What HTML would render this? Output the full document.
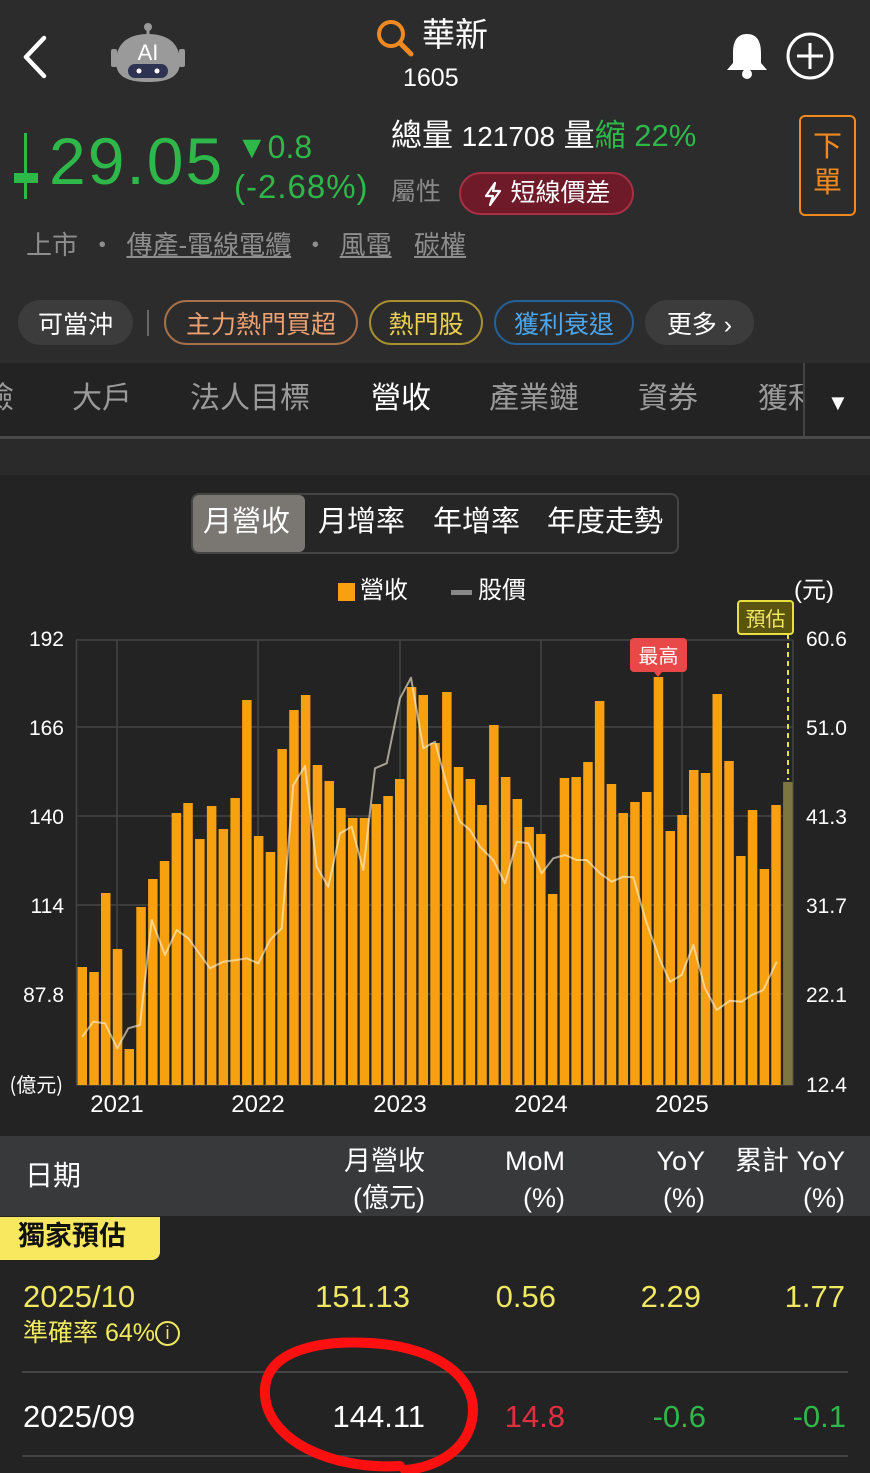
<!DOCTYPE html>
<html><head><meta charset="utf-8">
<style>
*{margin:0;padding:0;box-sizing:border-box}
body{width:870px;height:1473px;background:#232323;font-family:"Liberation Sans","Noto Sans CJK TC",sans-serif;color:#fff;position:relative;overflow:hidden}
.a{position:absolute;white-space:nowrap;line-height:1}
.chip{position:absolute;top:300px;height:45px;border-radius:23px;font-size:25px;display:flex;align-items:center;justify-content:center;border:2px solid}
.tab{position:absolute;top:384px;font-size:30px;color:#9a9a9a;line-height:1}
.r{text-align:right}
</style></head><body>
<!-- header -->
<div class="a" style="left:0;top:0;width:870px;height:363px;background:#2c2c2c"></div>
<svg class="a" style="left:18px;top:34px" width="32" height="46" viewBox="0 0 32 46"><path d="M26 4 L8 23 L26 42" fill="none" stroke="#fff" stroke-width="4.5" stroke-linecap="round" stroke-linejoin="round"/></svg>
<svg class="a" style="left:108px;top:22px" width="80" height="64" viewBox="0 0 80 64">
<circle cx="40" cy="5" r="4" fill="#999"/><rect x="38.5" y="6" width="3" height="10" fill="#999"/>
<rect x="3" y="27" width="6" height="18" rx="2" fill="#999"/><rect x="71" y="27" width="6" height="18" rx="2" fill="#999"/>
<path d="M8 40 C8 20 22 12 40 12 C58 12 72 20 72 40 C72 55 60 60 40 60 C20 60 8 55 8 40Z" fill="#9a9a9a"/>
<text x="40" y="38" font-size="22" fill="#fff" text-anchor="middle" font-family="Liberation Sans">AI</text>
<rect x="20" y="42" width="40" height="14" rx="7" fill="#2e3352"/><circle cx="31" cy="49" r="2.5" fill="#fff"/><circle cx="49" cy="49" r="2.5" fill="#fff"/></svg>
<svg class="a" style="left:375px;top:18px" width="40" height="40" viewBox="0 0 40 40"><circle cx="16" cy="16" r="12" fill="none" stroke="#f08a20" stroke-width="4"/><path d="M25 25 L36 36" stroke="#f08a20" stroke-width="5" stroke-linecap="round"/></svg>
<div class="a" style="left:422px;top:18px;font-size:33px">華新</div>
<div class="a" style="left:403px;top:66px;font-size:25px">1605</div>
<svg class="a" style="left:724px;top:31px" width="46" height="50" viewBox="0 0 46 50"><path d="M23 3 C12 3 9 12 9 22 L9 32 L3 39 L43 39 L37 32 L37 22 C37 12 34 3 23 3Z" fill="#fff"/><circle cx="23" cy="43" r="5" fill="#fff"/></svg>
<svg class="a" style="left:785px;top:31px" width="50" height="50" viewBox="0 0 50 50"><circle cx="25" cy="25" r="22" fill="none" stroke="#fff" stroke-width="3"/><path d="M25 12 V38 M12 25 H38" stroke="#fff" stroke-width="3"/></svg>

<svg class="a" style="left:12px;top:133px" width="30" height="66" viewBox="0 0 30 66"><rect x="12" y="0" width="3" height="66" fill="#2fb84a"/><rect x="2" y="40" width="24" height="10" fill="#2fb84a"/></svg>
<div class="a" style="left:49px;top:128px;font-size:66px;color:#2fb84a;letter-spacing:2px">29.05</div>
<div class="a" style="left:236px;top:131px;font-size:32px;color:#2fb84a">▼0.8</div>
<div class="a" style="left:234px;top:170px;font-size:33px;color:#2fb84a;letter-spacing:1px">(-2.68%)</div>
<div class="a" style="left:391px;top:120px;font-size:31px">總量 <span style="font-size:28px">121708</span> 量<span style="color:#2fb84a">縮 22%</span></div>
<div class="a" style="left:391px;top:180px;font-size:25px;color:#8a8a8a">屬性</div>
<div class="a" style="left:459px;top:172px;width:175px;height:43px;border-radius:22px;background:#6e1a28;border:2px solid #a83045;font-size:25px;display:flex;align-items:center;justify-content:center">
<svg width="22" height="26" viewBox="0 0 22 26" style="margin-right:6px"><path d="M13 2 L4 15 L11 15 L8 24 L18 10 L11 10 Z" fill="none" stroke="#fff" stroke-width="2.2" stroke-linejoin="round"/></svg>短線價差</div>
<div class="a" style="left:799px;top:115px;width:57px;height:101px;border:2px solid #f08a20;border-radius:6px;color:#f08a20;font-size:29px;line-height:36px;text-align:center;padding-top:12px;white-space:normal">下<br>單</div>
<div class="a" style="left:26px;top:232px;font-size:26px;color:#8e8e8e;word-spacing:4px">上市 ・ <u>傳產-電線電纜</u> ・ <u>風電</u>&nbsp; <u>碳權</u></div>

<div class="chip" style="left:18px;width:115px;background:#3c3c3c;border-color:#3c3c3c;color:#fff">可當沖</div>
<div class="a" style="left:147px;top:310px;width:2px;height:26px;background:#666"></div>
<div class="chip" style="left:164px;width:194px;border-color:#a8704a;color:#eda070">主力熱門買超</div>
<div class="chip" style="left:369px;width:114px;border-color:#a89030;color:#ecd050">熱門股</div>
<div class="chip" style="left:494px;width:140px;border-color:#24609a;color:#4aa6ee">獲利衰退</div>
<div class="chip" style="left:645px;width:109px;background:#3c3c3c;border-color:#3c3c3c;color:#fff">更多 ›</div>

<!-- tabs -->
<div class="a" style="left:0;top:363px;width:870px;height:75px;background:#232323"></div>
<div class="tab" style="left:-16px">險</div>
<div class="tab" style="left:72px">大戶</div>
<div class="tab" style="left:190px">法人目標</div>
<div class="tab" style="left:371px;color:#fff">營收</div>
<div class="tab" style="left:489px">產業鏈</div>
<div class="tab" style="left:638px">資券</div>
<div class="a" style="left:758px;top:384px;width:45px;overflow:hidden;font-size:30px;color:#9a9a9a">獲利</div>
<div class="a" style="left:803px;top:363px;width:2px;height:75px;background:#444"></div>
<div class="a" style="left:827px;top:392px;font-size:22px">▼</div>
<div class="a" style="left:0;top:436px;width:870px;height:3px;background:#4a4a4a"></div>
<div class="a" style="left:0;top:439px;width:870px;height:36px;background:#2a2a2a"></div>

<!-- segmented -->
<div class="a" style="left:191px;top:493px;width:488px;height:61px;border:2px solid #444;border-radius:8px;background:#262626"></div>
<div class="a" style="left:193px;top:495px;width:112px;height:57px;border-radius:6px;background:#7a7672"></div>
<div class="a" style="left:203px;top:508px;font-size:29px">月營收</div>
<div class="a" style="left:318px;top:508px;font-size:29px">月增率</div>
<div class="a" style="left:433px;top:508px;font-size:29px">年增率</div>
<div class="a" style="left:547px;top:508px;font-size:29px">年度走勢</div>

<div class="a" style="left:338px;top:583px;width:17px;height:18px;background:#f7a010"></div>
<div class="a" style="left:360px;top:579px;font-size:24px">營收</div>
<div class="a" style="left:451px;top:590px;width:21px;height:5px;background:#888"></div>
<div class="a" style="left:478px;top:579px;font-size:24px">股價</div>
<div class="a" style="left:794px;top:579px;font-size:24px">(元)</div>

<!-- chart -->
<svg class="a" style="left:0;top:0" width="870" height="1130" viewBox="0 0 870 1130">
<g stroke="#444" stroke-width="1.5" fill="none">
<path d="M76 640 H793 M76 727 H793 M76 816 H793 M76 905 H793 M76 994 H793 M76 1085 H793"/>
<path d="M76.5 640 V1085 M117 640 V1085 M258 640 V1085 M400 640 V1085 M541 640 V1085 M682 640 V1085 M793 640 V1085"/>
</g>
<g fill="#f7a010">
<rect x="77.5" y="967" width="9.5" height="118"/><rect x="89.3" y="972" width="9.5" height="113"/><rect x="101" y="893" width="9.5" height="192"/><rect x="112.8" y="949" width="9.5" height="136"/><rect x="124.5" y="1049" width="9.5" height="36"/><rect x="136.3" y="907" width="9.5" height="178"/><rect x="148.1" y="879" width="9.5" height="206"/><rect x="159.8" y="861" width="9.5" height="224"/><rect x="171.6" y="813" width="9.5" height="272"/><rect x="183.3" y="803" width="9.5" height="282"/><rect x="195.1" y="839" width="9.5" height="246"/><rect x="206.9" y="806" width="9.5" height="279"/><rect x="218.6" y="829" width="9.5" height="256"/><rect x="230.4" y="798" width="9.5" height="287"/><rect x="242.1" y="700" width="9.5" height="385"/><rect x="253.9" y="836" width="9.5" height="249"/><rect x="265.7" y="852" width="9.5" height="233"/><rect x="277.4" y="749" width="9.5" height="336"/><rect x="289.2" y="710" width="9.5" height="375"/><rect x="300.9" y="695" width="9.5" height="390"/><rect x="312.7" y="765" width="9.5" height="320"/><rect x="324.5" y="781" width="9.5" height="304"/><rect x="336.2" y="808" width="9.5" height="277"/><rect x="348" y="818" width="9.5" height="267"/><rect x="359.7" y="818" width="9.5" height="267"/><rect x="371.5" y="804" width="9.5" height="281"/><rect x="383.3" y="796" width="9.5" height="289"/><rect x="395" y="779" width="9.5" height="306"/><rect x="406.8" y="687" width="9.5" height="398"/><rect x="418.5" y="695" width="9.5" height="390"/><rect x="430.3" y="743" width="9.5" height="342"/><rect x="442.1" y="692" width="9.5" height="393"/><rect x="453.8" y="767" width="9.5" height="318"/><rect x="465.6" y="779" width="9.5" height="306"/><rect x="477.3" y="805" width="9.5" height="280"/><rect x="489.1" y="725" width="9.5" height="360"/><rect x="500.9" y="777" width="9.5" height="308"/><rect x="512.6" y="799" width="9.5" height="286"/><rect x="524.4" y="827" width="9.5" height="258"/><rect x="536.1" y="834" width="9.5" height="251"/><rect x="547.9" y="894" width="9.5" height="191"/><rect x="559.7" y="778" width="9.5" height="307"/><rect x="571.4" y="777" width="9.5" height="308"/><rect x="583.2" y="762" width="9.5" height="323"/><rect x="594.9" y="701" width="9.5" height="384"/><rect x="606.7" y="784" width="9.5" height="301"/><rect x="618.5" y="813" width="9.5" height="272"/><rect x="630.2" y="802" width="9.5" height="283"/><rect x="642" y="792" width="9.5" height="293"/><rect x="653.7" y="677" width="9.5" height="408"/><rect x="665.5" y="831" width="9.5" height="254"/><rect x="677.3" y="815" width="9.5" height="270"/><rect x="689" y="770" width="9.5" height="315"/><rect x="700.8" y="773" width="9.5" height="312"/><rect x="712.5" y="694" width="9.5" height="391"/><rect x="724.3" y="761" width="9.5" height="324"/><rect x="736.1" y="856" width="9.5" height="229"/><rect x="747.8" y="810" width="9.5" height="275"/><rect x="759.6" y="869" width="9.5" height="216"/><rect x="771.3" y="805" width="9.5" height="280"/>
</g>
<rect x="783.1" y="782" width="9.5" height="303" fill="#7d7640"/>
<path d="M788 634 V780" stroke="#e8e040" stroke-width="2" stroke-dasharray="5,4"/>
<polyline fill="none" stroke="rgba(255,245,220,0.6)" stroke-width="2" stroke-linejoin="round" points="82.3,1036.7 93.3,1021.7 105,1023.3 117.3,1048.3 128.3,1028.3 140,1025 151.7,920 165,955 176.7,930 188.3,938.3 210,968.3 223.3,961.7 236.7,960 246.7,958.3 258.3,963.3 270,940 281.7,928.3 293.3,785 305,766 316.7,866.7 328.3,886.7 340,833.3 351.7,826.7 363.3,870 375,768.3 386.7,763.3 400,698.3 411,677.7 423.3,748.3 435,741.7 448.3,790 460,821.7 470,830 480,846.7 493.3,860 505,883.3 516.7,841.7 528.3,843.3 541.7,873.3 553.3,858.3 565,855 576.7,860 586.7,860 600,873.3 611.7,881.7 623.3,876.7 633.3,877.3 646.7,923.3 660,960 670,981.7 681.7,975 693.3,945 705,988.3 716.7,1010 730,1000.7 741.7,1001.7 751.7,995 763.3,990 776.7,961.7"/>
<rect x="630" y="638" width="57" height="34" rx="4" fill="#e84848"/><path d="M654 672 L658 677 L662 672Z" fill="#e84848"/>
<text x="658.5" y="663" font-size="20" fill="#fff" text-anchor="middle" font-family="Noto Sans CJK TC">最高</text>
<rect x="738" y="601" width="55" height="33" rx="3" fill="#5a5410" stroke="#e8e040" stroke-width="2"/>
<text x="765.5" y="626" font-size="20" fill="#f0e860" text-anchor="middle" font-family="Noto Sans CJK TC">預估</text>
<g font-size="21" fill="#fff" font-family="Liberation Sans" text-anchor="end">
<text x="64" y="646">192</text><text x="64" y="735">166</text><text x="64" y="824">140</text><text x="64" y="913">114</text><text x="64" y="1002">87.8</text><text x="63" y="1092" font-family="Noto Sans CJK TC" font-size="20">(億元)</text>
</g>
<g font-size="21" fill="#fff" font-family="Liberation Sans">
<text x="806" y="646">60.6</text><text x="806" y="735">51.0</text><text x="806" y="824">41.3</text><text x="806" y="913">31.7</text><text x="806" y="1002">22.1</text><text x="806" y="1092">12.4</text>
</g>
<g font-size="24" fill="#fff" font-family="Liberation Sans" text-anchor="middle">
<text x="117" y="1112">2021</text><text x="258" y="1112">2022</text><text x="400" y="1112">2023</text><text x="541" y="1112">2024</text><text x="682" y="1112">2025</text>
</g>
</svg>

<!-- table -->
<div class="a" style="left:0;top:1136px;width:870px;height:80px;background:#38393b"></div>
<div class="a" style="left:25px;top:1162px;font-size:28px">日期</div>
<div class="a r" style="right:445px;top:1143px;font-size:27px;line-height:37px">月營收<br>(億元)</div>
<div class="a r" style="right:305px;top:1143px;font-size:27px;line-height:37px">MoM<br>(%)</div>
<div class="a r" style="right:165px;top:1143px;font-size:27px;line-height:37px">YoY<br>(%)</div>
<div class="a r" style="right:25px;top:1143px;font-size:27px;line-height:37px">累計 YoY<br>(%)</div>
<div class="a" style="left:0;top:1217px;width:160px;height:43px;background:#f7e860;border-radius:0 0 8px 0;color:#111;font-size:27px;font-weight:bold;padding:6px 0 0 18px">獨家預估</div>
<div class="a" style="left:23px;top:1281px;font-size:31px;color:#f0e860">2025/10</div>
<div class="a r" style="right:460px;top:1281px;font-size:31px;color:#f0e860">151.13</div>
<div class="a r" style="right:314px;top:1281px;font-size:31px;color:#f0e860">0.56</div>
<div class="a r" style="right:169px;top:1281px;font-size:31px;color:#f0e860">2.29</div>
<div class="a r" style="right:25px;top:1281px;font-size:31px;color:#f0e860">1.77</div>
<div class="a" style="left:23px;top:1321px;font-size:25px;color:#f0e860">準確率 64%<span style="display:inline-block;width:25px;height:25px;border:2px solid #f0e860;border-radius:50%;font-size:18px;text-align:center;line-height:21px;vertical-align:top">i</span></div>
<div class="a" style="left:22px;top:1371px;width:826px;height:2px;background:#444"></div>
<div class="a" style="left:23px;top:1401px;font-size:31px">2025/09</div>
<div class="a r" style="right:445px;top:1401px;font-size:31px">144.11</div>
<div class="a r" style="right:305px;top:1401px;font-size:31px;color:#e03040">14.8</div>
<div class="a r" style="right:164px;top:1401px;font-size:31px;color:#2fb84a">-0.6</div>
<div class="a r" style="right:24px;top:1401px;font-size:31px;color:#2fb84a">-0.1</div>
<div class="a" style="left:22px;top:1455px;width:826px;height:2px;background:#444"></div>
<svg class="a" style="left:0;top:1320px" width="870" height="153" viewBox="0 1320 870 153">
<path d="M400 1466 C330 1470 268 1440 265 1395 C262 1350 320 1340 370 1343 C440 1347 480 1380 472 1420 C465 1455 430 1468 405 1470" fill="none" stroke="#ff1010" stroke-width="10" stroke-linecap="round"/>
</svg>
</body></html>
